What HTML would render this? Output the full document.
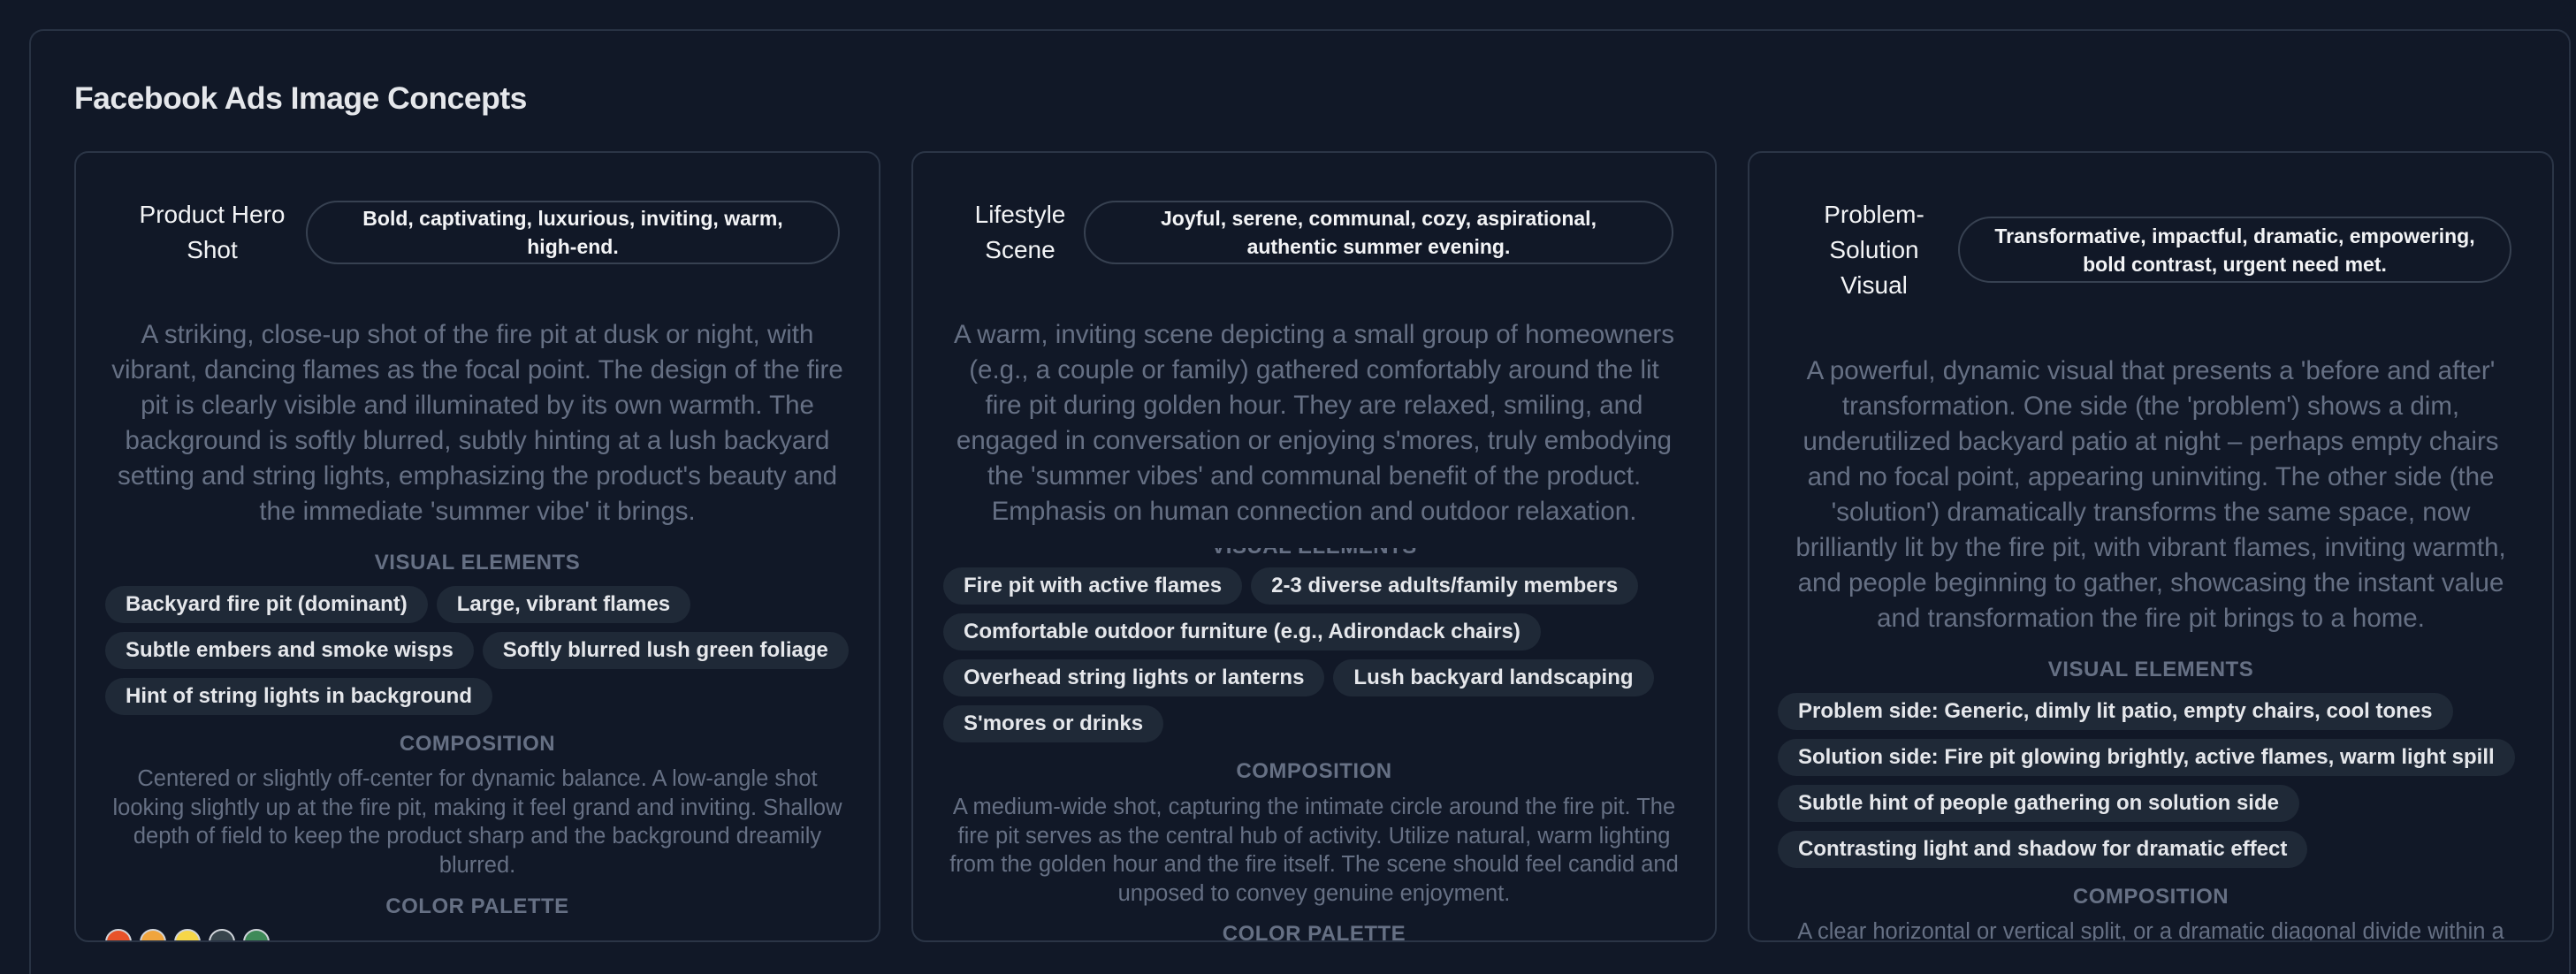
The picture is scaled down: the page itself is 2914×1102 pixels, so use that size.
<!DOCTYPE html>
<html><head><meta charset="utf-8"><style>
*{margin:0;padding:0;box-sizing:border-box}
html,body{width:2914px;height:1102px;overflow:hidden;background:#111827;font-family:"Liberation Sans",sans-serif}
.panel{position:absolute;left:33px;top:33px;width:2875px;height:1069px;border:2px solid #283243;border-bottom:none;border-radius:16px 16px 0 0;background:#111827}
h1{position:absolute;left:84px;top:88px;font-size:35.5px;font-weight:700;color:#e5e7eb;letter-spacing:-0.5px;line-height:46px}
.card{position:absolute;top:171px;height:895px;border:2px solid #2b3546;border-radius:16px;overflow:hidden;background:#111827}
.ab{position:absolute}
.title{color:#f3f4f6;font-size:28px;line-height:40px;text-align:center}
.pill{border:2px solid #374151;border-radius:40px;display:flex;align-items:center;justify-content:center;text-align:center;color:#f3f4f6;font-size:23px;font-weight:700;line-height:32px}
.desc{left:10px;right:10px;text-align:center;color:#667084;font-size:29.5px;line-height:40px;white-space:nowrap}
.hd{left:0;right:0;text-align:center;color:#667084;font-size:24px;font-weight:700;line-height:28px;letter-spacing:0.5px}
.chips{display:flex;flex-wrap:wrap;gap:10px 10px}
.chip{height:42px;line-height:42px;padding:0 23px;border-radius:21px;background:#1f2937;color:#e5e7eb;font-size:24px;font-weight:700;white-space:nowrap}
.comp{left:10px;right:10px;text-align:center;color:#667084;font-size:25.5px;line-height:32.5px;white-space:nowrap}
.dot{position:absolute;width:30px;height:30px;border-radius:50%;border:2px solid #d1d5db}
</style></head><body>
<div class="panel"></div>
<h1>Facebook Ads Image Concepts</h1>

<div class="card" style="left:84px;width:912px">
  <div class="ab title" style="left:64px;width:180px;top:50px">Product Hero<br>Shot</div>
  <div class="ab pill" style="left:260px;width:604px;top:54px;height:72px">Bold, captivating, luxurious, inviting, warm,<br>high-end.</div>
  <div class="ab desc" style="top:186px">A striking, close-up shot of the fire pit at dusk or night, with<br>vibrant, dancing flames as the focal point. The design of the fire<br>pit is clearly visible and illuminated by its own warmth. The<br>background is softly blurred, subtly hinting at a lush backyard<br>setting and string lights, emphasizing the product's beauty and<br>the immediate 'summer vibe' it brings.</div>
  <div class="ab hd" style="top:450px">VISUAL ELEMENTS</div>
  <div class="ab chips" style="left:33px;right:10px;top:490px">
    <span class="chip">Backyard fire pit (dominant)</span><span class="chip">Large, vibrant flames</span>
    <span class="chip">Subtle embers and smoke wisps</span><span class="chip">Softly blurred lush green foliage</span>
    <span class="chip">Hint of string lights in background</span>
  </div>
  <div class="ab hd" style="top:655px">COMPOSITION</div>
  <div class="ab comp" style="top:692px">Centered or slightly off-center for dynamic balance. A low-angle shot<br>looking slightly up at the fire pit, making it feel grand and inviting. Shallow<br>depth of field to keep the product sharp and the background dreamily<br>blurred.</div>
  <div class="ab hd" style="top:839px">COLOR PALETTE</div>
  <div class="dot" style="left:33px;top:878px;background:#e8522a"></div>
  <div class="dot" style="left:72px;top:878px;background:#f0a53e"></div>
  <div class="dot" style="left:111px;top:878px;background:#f6d648"></div>
  <div class="dot" style="left:150px;top:878px;background:#38454d"></div>
  <div class="dot" style="left:189px;top:878px;background:#3f8a58"></div>
</div>

<div class="card" style="left:1031px;width:911px">
  <div class="ab title" style="left:46px;width:150px;top:50px">Lifestyle<br>Scene</div>
  <div class="ab pill" style="left:193px;width:667px;top:54px;height:72px">Joyful, serene, communal, cozy, aspirational,<br>authentic summer evening.</div>
  <div class="ab hd" style="top:432px">VISUAL ELEMENTS</div>
  <div class="ab" style="left:0;right:0;top:300px;height:147px;background:#111827"></div>
  <div class="ab desc" style="top:186px">A warm, inviting scene depicting a small group of homeowners<br>(e.g., a couple or family) gathered comfortably around the lit<br>fire pit during golden hour. They are relaxed, smiling, and<br>engaged in conversation or enjoying s'mores, truly embodying<br>the 'summer vibes' and communal benefit of the product.<br>Emphasis on human connection and outdoor relaxation.</div>
  <div class="ab chips" style="left:34px;right:10px;top:469px">
    <span class="chip">Fire pit with active flames</span><span class="chip">2-3 diverse adults/family members</span>
    <span class="chip">Comfortable outdoor furniture (e.g., Adirondack chairs)</span>
    <span class="chip">Overhead string lights or lanterns</span><span class="chip">Lush backyard landscaping</span>
    <span class="chip">S'mores or drinks</span>
  </div>
  <div class="ab hd" style="top:686px">COMPOSITION</div>
  <div class="ab comp" style="top:724px">A medium-wide shot, capturing the intimate circle around the fire pit. The<br>fire pit serves as the central hub of activity. Utilize natural, warm lighting<br>from the golden hour and the fire itself. The scene should feel candid and<br>unposed to convey genuine enjoyment.</div>
  <div class="ab hd" style="top:870px">COLOR PALETTE</div>
</div>

<div class="card" style="left:1977px;width:912px">
  <div class="ab title" style="left:66px;width:150px;top:50px">Problem-<br>Solution<br>Visual</div>
  <div class="ab pill" style="left:236px;width:626px;top:72px;height:75px">Transformative, impactful, dramatic, empowering,<br>bold contrast, urgent need met.</div>
  <div class="ab desc" style="top:227px">A powerful, dynamic visual that presents a 'before and after'<br>transformation. One side (the 'problem') shows a dim,<br>underutilized backyard patio at night – perhaps empty chairs<br>and no focal point, appearing uninviting. The other side (the<br>'solution') dramatically transforms the same space, now<br>brilliantly lit by the fire pit, with vibrant flames, inviting warmth,<br>and people beginning to gather, showcasing the instant value<br>and transformation the fire pit brings to a home.</div>
  <div class="ab hd" style="top:571px">VISUAL ELEMENTS</div>
  <div class="ab chips" style="left:32px;right:10px;top:611px">
    <span class="chip">Problem side: Generic, dimly lit patio, empty chairs, cool tones</span>
    <span class="chip">Solution side: Fire pit glowing brightly, active flames, warm light spill</span>
    <span class="chip">Subtle hint of people gathering on solution side</span>
    <span class="chip">Contrasting light and shadow for dramatic effect</span>
  </div>
  <div class="ab hd" style="top:828px">COMPOSITION</div>
  <div class="ab comp" style="top:865px">A clear horizontal or vertical split, or a dramatic diagonal divide within a</div>
</div>
</body></html>
